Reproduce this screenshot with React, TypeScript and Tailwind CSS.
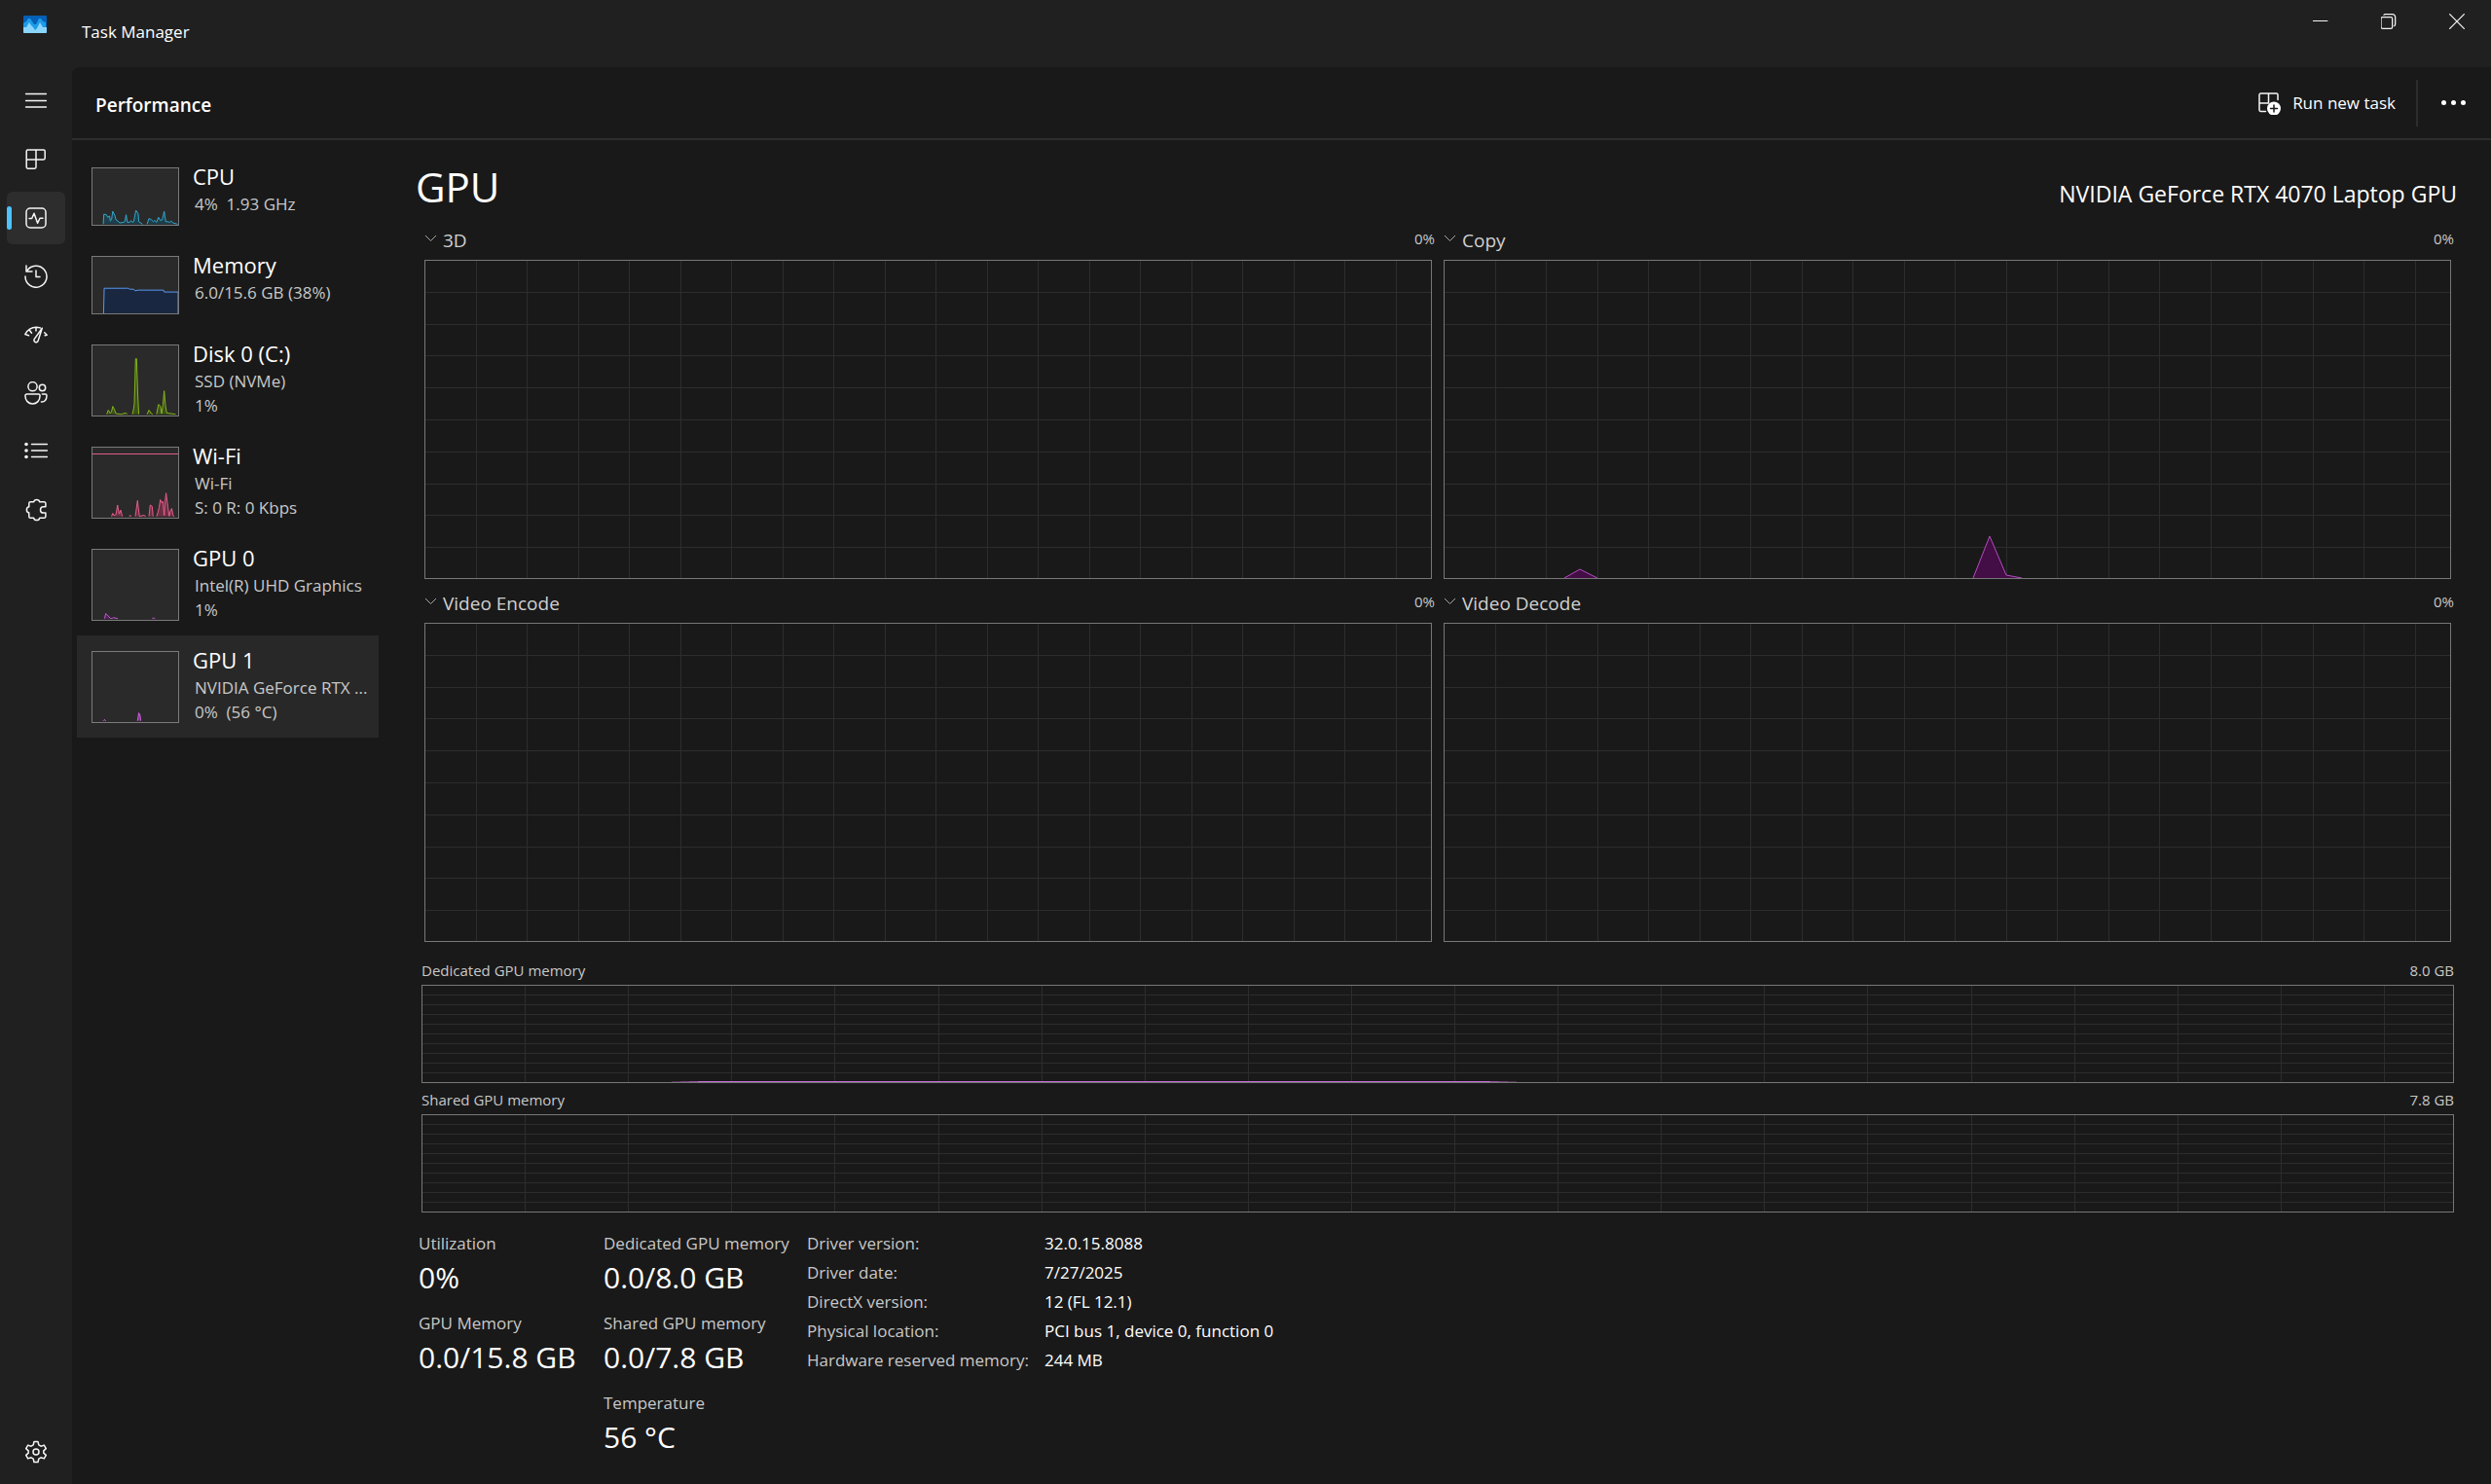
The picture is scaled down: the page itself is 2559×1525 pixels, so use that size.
import type { ReactNode } from "react";

type IconProps = { children: ReactNode; className?: string };

function Icon({ children, className = "size-6" }: IconProps) {
  return (
    <svg
      viewBox="0 0 24 24"
      className={className}
      fill="none"
      stroke="#f5f5f5"
      strokeWidth="1.5"
      strokeLinecap="round"
      strokeLinejoin="round"
      aria-hidden="true"
    >
      {children}
    </svg>
  );
}

const navItems: { label: string; active?: boolean; icon: ReactNode }[] = [
  { label: "Open navigation", icon: <path d="M1.5 4.500h21M1.5 11.500h21M1.5 18h21" strokeWidth="1.300" /> },
  {
    label: "Processes",
    icon: (
      <path d="M3.600 2h16.200a1.400 1.400 0 0 1 1.400 1.400v7.200a1.400 1.400 0 0 1-1.400 1.400H12v7.800a1.400 1.400 0 0 1-1.400 1.400H3.600a1.400 1.400 0 0 1-1.400-1.400V3.400A1.400 1.400 0 0 1 3.600 2zM12 2v10H2.200" />
    ),
  },
  {
    label: "Performance",
    active: true,
    icon: (
      <>
        <rect x="2" y="2" width="20" height="20" rx="4" />
        <path d="M5 12.500h2.700L10 7.200l3.600 10 2.400-5H19" />
      </>
    ),
  },
  {
    label: "App history",
    icon: (
      <>
        <path d="M2 1v6h6" />
        <path d="M2.600 6.500A11 11 0 1 1 1 12" />
        <path d="M12 6V12.500h4" />
      </>
    ),
  },
  {
    label: "Startup apps",
    icon: (
      <>
        <path d="M.8 11.500C3.300 6.800 7 4.200 12.300 4.200c1.700 0 2.900.3 4 .7M.8 11.500l3.700 1.300M5.300 7.200l2.200 3M12 4.400v3.500M20.700 9.700l2.500 2.500-2 .5" />
        <path d="M18.300 5.200 14.200 18c-.5 1.500-1.800 2-3 1.500s-1.600-1.900-.9-3.100z" />
      </>
    ),
  },
  {
    label: "Users",
    icon: (
      <>
        <circle cx="8.500" cy="5.200" r="4.600" />
        <circle cx="18.500" cy="6.500" r="3.200" />
        <path d="M2.500 13h12a1.600 1.600 0 0 1 1.600 1.600c0 5-3.200 8.300-7.600 8.300S.9 19.600.9 14.600A1.600 1.600 0 0 1 2.500 13z" />
        <path d="M18.300 13h3.200a1.500 1.500 0 0 1 1.500 1.500c0 4.400-2.200 6.700-5.600 6.400" />
      </>
    ),
  },
  {
    label: "Details",
    icon: (
      <>
        <path d="M7.500 4.500h16M7.500 11h16M7.500 17.500h16" strokeWidth="1.400" />
        <g fill="#f5f5f5" stroke="none">
          <circle cx="2" cy="4.500" r="1.800" />
          <circle cx="2" cy="11" r="1.800" />
          <circle cx="2" cy="17.500" r="1.800" />
        </g>
      </>
    ),
  },
  {
    label: "Services",
    icon: (
      <path d="M6.300 3.800h3.300a3.200 3.200 0 0 1 6.200 0h4.600a1.500 1.500 0 0 1 1.500 1.500v3.400h-2.200a3.200 3.200 0 0 0 0 6.400h2.200v3.600a1.500 1.500 0 0 1-1.500 1.500h-4.600a3.200 3.200 0 0 1-6.200 0H6.300a1.500 1.500 0 0 1-1.500-1.500v-3.700a3.200 3.200 0 0 1 0-6.200V5.300a1.500 1.500 0 0 1 1.500-1.500z" />
    ),
  },
];

type Resource = {
  name: string;
  lines: string[];
  tall?: boolean;
  selected?: boolean;
  stroke: string;
  fill: string;
  series: string[];
  cap?: number;
};

const resources: Resource[] = [
  {
    name: "CPU",
    lines: ["4%  1.93 GHz"],
    stroke: "#35a9cf",
    fill: "#1d3f4b",
    series: [
      "34,178 36,146 44,148 48,156 54,152 56,168 60,164 64,137 70,149 74,164 80,168 86,174 98,172 102,170 106,148 110,172 116,172 122,167 126,172 130,170 137,134 144,144 146,170 152,174 158,178",
      "172,178 178,160 186,164 192,170 196,166 202,172 208,156 214,166 220,164 226,137 231,170 238,170 244,172 248,168 254,174 268,178",
    ],
  },
  {
    name: "Memory",
    lines: ["6.0/15.6 GB (38%)"],
    stroke: "#5b9bf5",
    fill: "#1a2740",
    series: ["35,180 37,100 112,100 118,103 130,103 134,108 144,106 224,106 226,112 270,112 270,184"],
  },
  {
    name: "Disk 0 (C:)",
    lines: ["SSD (NVMe)", "1%"],
    tall: true,
    stroke: "#86b81b",
    fill: "#3c4f19",
    series: [
      "45,218 50,205 56,215 60,210 64,193 70,205 74,216 90,218 106,214 110,218",
      "126,218 130,200 132,184 136,42 139,42 143,160 146,218",
      "172,218 178,205 186,216 190,218",
      "202,218 208,187 214,192 218,216 222,190 226,144 230,190 234,214 240,215 262,218",
    ],
  },
  {
    name: "Wi-Fi",
    lines: ["Wi-Fi", "S: 0 R: 0 Kbps"],
    tall: true,
    stroke: "#e8608a",
    fill: "#6b2f45",
    cap: 20,
    series: [
      "60,218 64,208 68,215 74,212 79,182 84,210 89,198 94,218",
      "116,218 119,214 122,218",
      "135,218 142,168 148,218 162,214 168,218",
      "178,218 182,182 188,186 191,218",
      "202,218 206,206 210,190 214,165 219,175 222,170 226,215 229,170 232,144 238,190 242,217 246,200 250,193 254,215 258,218",
    ],
  },
  {
    name: "GPU 0",
    lines: ["Intel(R) UHD Graphics", "1%"],
    tall: true,
    stroke: "#c45ad4",
    fill: "#54205e",
    series: ["38,218 42,202 50,210 56,217 62,217 66,215 80,218", "188,218 192,216 197,218"],
  },
  {
    name: "GPU 1",
    lines: ["NVIDIA GeForce RTX ...", "0%  (56 °C)"],
    tall: true,
    selected: true,
    stroke: "#d065e0",
    fill: "#7a3387",
    series: ["34,218 38,214 42,218", "142,218 146,193 150,200 152,218"],
  },
];

function ResourceItem({ item }: { item: Resource }) {
  const height = item.tall ? 222 : 180;
  return (
    <button
      type="button"
      aria-current={item.selected ? "true" : undefined}
      className={
        "flex w-full items-start gap-[14px] pl-[15px] text-left " +
        (item.tall ? "h-[105px] " : "h-[91px] ") +
        (item.selected ? "bg-[#282828]" : "")
      }
    >
      <span
        className={
          "mt-4 block w-[90px] shrink-0 border border-[#7a7a7a] bg-[#2a2a2a] " + (item.tall ? "h-[74px]" : "h-[60px]")
        }
      >
        <svg viewBox={`0 0 270 ${height}`} preserveAspectRatio="none" className="block size-full" aria-hidden="true">
          {item.cap !== undefined && <path d={`M0 ${item.cap}H270`} stroke={item.stroke} strokeWidth="3" />}
          {item.series.map((points) => (
            <polyline key={points} points={points} fill={item.fill} stroke={item.stroke} strokeWidth="3" />
          ))}
        </svg>
      </span>
      <span className="mt-[11px] flex min-w-0 flex-col whitespace-pre">
        <span className="mb-[2px] text-[22px] leading-7 text-white">{item.name}</span>
        {item.lines.map((line) => (
          <span key={line} className="pl-[2px] text-[17px] leading-[25px] text-[#c8c8c8]">
            {line}
          </span>
        ))}
      </span>
    </button>
  );
}

type PlotProps = {
  width: number;
  height: number;
  stepX: number;
  stepY: number;
  className: string;
  children?: ReactNode;
};

function Plot({ width, height, stepX, stepY, className, children }: PlotProps) {
  const columns = Array.from({ length: 19 }, (_, i) => Math.round((i + 1) * stepX) - 0.5);
  const rows = Array.from({ length: 9 }, (_, i) => Math.round((i + 1) * stepY) - 0.5);
  return (
    <div className={"border border-[#777777] " + className}>
      <svg viewBox={`0 0 ${width} ${height}`} preserveAspectRatio="none" className="block size-full" aria-hidden="true">
        <g stroke="#2d2d2d" strokeWidth="1">
          {columns.map((x) => (
            <path key={x} d={`M${x} 0V${height}`} vectorEffect="non-scaling-stroke" />
          ))}
          {rows.map((y) => (
            <path key={y} d={`M0 ${y}H${width}`} vectorEffect="non-scaling-stroke" />
          ))}
        </g>
        {children}
      </svg>
    </div>
  );
}

function EngineChart({ name, children }: { name: string; children?: ReactNode }) {
  return (
    <section>
      <div className="mb-2 flex h-6 items-center justify-between">
        <button type="button" className="flex items-center gap-[7px] text-[19px] leading-6 text-[#d0d0d0]">
          <svg viewBox="0 0 12 8" className="mb-1 h-2 w-3" fill="none" stroke="#a8a8a8" aria-hidden="true">
            <path d="M1 1 6.500 6.500 12 1" />
          </svg>
          {name}
        </button>
        <span className="-mr-[3px] mb-1 text-[15px] leading-5 text-[#c8c8c8]">0%</span>
      </div>
      <Plot width={1033} height={326} stepX={52.5} stepY={32.8} className="h-82">
        {children}
      </Plot>
    </section>
  );
}

function MemoryChart({ name, max, children }: { name: string; max: string; children?: ReactNode }) {
  return (
    <section>
      <div className="mb-[3px] flex justify-between text-[15px] leading-6 text-[#c8c8c8]">
        <h3>{name}</h3>
        <span>{max}</span>
      </div>
      <Plot width={2086} height={99} stepX={106.1} stepY={10} className="h-[101px]">
        {children}
      </Plot>
    </section>
  );
}

function Stat({ label, value }: { label: string; value: string }) {
  return (
    <div className="pb-3">
      <dt className="text-[17px] leading-[30px] text-[#c8c8c8]">{label}</dt>
      <dd className="text-[30px] leading-10 text-white">{value}</dd>
    </div>
  );
}

const details = [
  ["Driver version:", "32.0.15.8088"],
  ["Driver date:", "7/27/2025"],
  ["DirectX version:", "12 (FL 12.1)"],
  ["Physical location:", "PCI bus 1, device 0, function 0"],
  ["Hardware reserved memory:", "244 MB"],
];

export default function App() {
  return (
    <div className="flex min-h-screen flex-col bg-[#202020] font-['Open_Sans','Noto_Sans',sans-serif] text-white">
      <header className="flex h-[69px] items-start">
        <svg viewBox="0 0 24 18" className="mt-4 ml-6 h-[18px] w-6" aria-hidden="true">
          <rect width="24" height="18" rx="1" fill="#0560b6" />
          <path d="M0 8 3 6 5 3h2l2 3 2 3h2l2-4 1-2h2l2 3 3 1v10H0z" fill="#1e9be8" />
          <path d="M0 12h3l3-5 2 3 2 2 2 3 2-2 3-6 3 5h4v5a1 1 0 0 1-1 1H1a1 1 0 0 1-1-1z" fill="#8ad5fc" />
        </svg>
        <h1 className="mt-5 ml-9 text-[17px] leading-[26px]">Task Manager</h1>
        <div className="ml-auto flex">
          <button type="button" aria-label="Minimize" className="flex h-11 w-[70px] items-center justify-center">
            <Icon className="size-4">
              <path d="M0 11.250h23" strokeLinecap="butt" />
            </Icon>
          </button>
          <button type="button" aria-label="Restore" className="flex h-11 w-[70px] items-center justify-center">
            <Icon className="size-4">
              <g strokeWidth="1.900">
                <rect x="0" y="5.500" width="17.500" height="17.500" rx="2.500" />
                <path d="M4.500 2Q5 1 7 1h10.500A4.500 4.500 0 0 1 22 5.500V16q0 2-1.500 3" />
              </g>
            </Icon>
          </button>
          <button type="button" aria-label="Close" className="flex h-11 w-[70px] items-center justify-center">
            <Icon className="size-4">
              <path d="M1 1l22 22M23 1 1 23" strokeWidth="1.900" />
            </Icon>
          </button>
        </div>
      </header>

      <div className="flex flex-1">
        <nav className="flex w-[74px] shrink-0 flex-col items-center gap-[6px] pt-2" aria-label="Pages">
          {navItems.map((item) => (
            <button
              key={item.label}
              type="button"
              aria-label={item.label}
              aria-current={item.active ? "page" : undefined}
              className={
                "relative flex h-[54px] w-15 items-center justify-center rounded-md " +
                (item.active ? "bg-[#2d2d2d]" : "")
              }
            >
              {item.active && <span className="absolute top-[15px] left-0 h-6 w-[5px] rounded-full bg-[#4cc2ff]" />}
              <Icon>{item.icon}</Icon>
            </button>
          ))}
          <button
            type="button"
            aria-label="Settings"
            className="mt-auto mb-[6px] flex h-[54px] w-15 items-center justify-center"
          >
            <Icon>
              <circle cx="12" cy="12" r="3" />
              <path d="M10 1.500h4l.8 3.400 2.200 1.300 3.300-1.100 2 3.500-2.500 2.300v2.200l2.500 2.300-2 3.500-3.300-1.100-2.200 1.300-.8 3.400h-4l-.8-3.400L7 17.800l-3.300 1.100-2-3.500 2.500-2.300v-2.200L1.700 8.600l2-3.500L7 6.200l2.200-1.300z" />
            </Icon>
          </button>
        </nav>

        <div className="flex min-w-0 flex-1 flex-col rounded-tl-lg bg-[#191919]">
          <div className="flex h-[75px] items-center border-b-2 border-[#2d2d2d] pl-6">
            <h2 className="pt-1 text-[19px] leading-7 font-semibold">Performance</h2>
            <button type="button" className="ml-auto flex items-center gap-3 pr-[21px] text-[17px] leading-6">
              <Icon>
                <path d="M8.500 20.500H3.400A1.400 1.400 0 0 1 2 19.100V3.400A1.400 1.400 0 0 1 3.400 2h16.200A1.400 1.400 0 0 1 21 3.400v5.100M11.500 2v10H2" />
                <circle cx="17" cy="17.500" r="7" fill="#fff" stroke="none" />
                <path d="M17 14v7M13.500 17.500h7" stroke="#191919" />
              </Icon>
              Run new task
            </button>
            <span className="h-12 w-[2px] bg-[#2d2d2d]" />
            <button type="button" aria-label="More options" className="mr-[26px] ml-6 flex h-12 items-center gap-[5px]">
              <span className="size-[5px] rounded-full bg-white" />
              <span className="size-[5px] rounded-full bg-white" />
              <span className="size-[5px] rounded-full bg-white" />
            </button>
          </div>

          <div className="flex flex-1">
            <aside className="w-[315px] shrink-0 pt-3 pl-[5px]" aria-label="Resources">
              {resources.map((item) => (
                <ResourceItem key={item.name} item={item} />
              ))}
            </aside>

            <main className="min-w-0 flex-1 pt-5 pr-[35px] pl-10">
              <div className="flex items-baseline justify-between pl-px">
                <h2 className="-ml-[3px] text-[42px] leading-14">GPU</h2>
                <p className="text-[23px] leading-8">NVIDIA GeForce RTX 4070 Laptop GPU</p>
              </div>

              <div className="mt-[15px] grid grid-cols-2 gap-x-3 gap-y-[13px] pr-[6px] pl-[7px]">
                <EngineChart name="3D" />
                <EngineChart name="Copy">
                  <g fill="#430d45" stroke="#b04fbf" strokeWidth="1">
                    <polyline points="123,326 139,317 157,326" />
                    <polyline points="543,326 560,283 577,323 593,326" />
                  </g>
                </EngineChart>
                <EngineChart name="Video Encode" />
                <EngineChart name="Video Decode" />
              </div>

              <div className="mt-[17px] flex flex-col gap-[5px] pr-[3px] pl-1">
                <MemoryChart name="Dedicated GPU memory" max="8.0 GB">
                  <g fill="#c76bd6">
                    <rect x="256" y="98" width="9" height="1" opacity="0.3" />
                    <rect x="265" y="98" width="9" height="1" opacity="0.5" />
                    <rect x="274" y="98" width="9" height="1" opacity="0.7" />
                    <rect x="283" y="98" width="814" height="1" />
                    <rect x="1097" y="98" width="9" height="1" opacity="0.7" />
                    <rect x="1106" y="98" width="9" height="1" opacity="0.5" />
                    <rect x="1115" y="98" width="9" height="1" opacity="0.3" />
                  </g>
                </MemoryChart>
                <MemoryChart name="Shared GPU memory" max="7.8 GB" />
              </div>

              <div className="mt-[17px] flex pl-px">
                <dl className="w-[190px] shrink-0">
                  <Stat label="Utilization" value="0%" />
                  <Stat label="GPU Memory" value="0.0/15.8 GB" />
                </dl>
                <dl className="w-[209px] shrink-0">
                  <Stat label="Dedicated GPU memory" value="0.0/8.0 GB" />
                  <Stat label="Shared GPU memory" value="0.0/7.8 GB" />
                  <Stat label="Temperature" value="56 °C" />
                </dl>
                <table className="h-[150px] self-start text-left text-[17px] leading-[30px]">
                  <tbody>
                    {details.map(([label, value]) => (
                      <tr key={label}>
                        <th scope="row" className="w-61 p-0 font-normal whitespace-nowrap text-[#c8c8c8]">
                          {label}
                        </th>
                        <td className="p-0 whitespace-nowrap text-white">{value}</td>
                      </tr>
                    ))}
                  </tbody>
                </table>
              </div>
            </main>
          </div>
        </div>
      </div>
    </div>
  );
}
